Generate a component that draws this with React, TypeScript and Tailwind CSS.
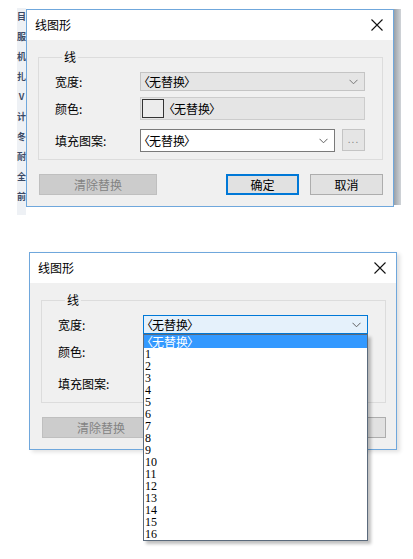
import React from "react";

const FONT = { fontFamily: '"Noto Sans CJK SC", "Noto Sans", sans-serif' };

const Chevron: React.FC<{ color?: string }> = ({ color = "#606060" }) => (
  <svg width="9" height="6" viewBox="0 0 9 6" className="flex-none">
    <path d="M0.5 0.8 L4.5 4.8 L8.5 0.8" fill="none" stroke={color} strokeWidth="1" />
  </svg>
);

const CloseX: React.FC = () => (
  <svg width="12" height="12" viewBox="0 0 12 12">
    <path d="M0.5 0.5 L11.5 11.5 M11.5 0.5 L0.5 11.5" stroke="#111" strokeWidth="1.1" />
  </svg>
);

// "〈无替换〉" with the brackets pulled in, as the narrow ones of the original
const NoReplace: React.FC = () => (
  <span className="whitespace-nowrap">
    <span className="-ml-[5px]">〈</span>
    <span className="-ml-[1px]">无替换</span>
    <span className="-ml-[1px] -mr-[5px]">〉</span>
  </span>
);

const WIDTHS = Array.from({ length: 16 }, (_, i) => String(i + 1));

const WidthList: React.FC = () => (
  <div className="absolute left-0 top-full w-[225px] z-10 border border-[#5a6a7c] bg-white shadow-[3px_3px_3px_rgba(0,0,0,0.25)]">
    <div className="h-[13px] bg-[#3399ff] text-white text-[12px] leading-[13px] pl-[2px]">
      <NoReplace />
    </div>
    {WIDTHS.map((w) => (
      <div
        key={w}
        className="h-[12px] text-[12px] leading-[12px] text-black pl-[1px]"
        style={{ fontFamily: '"Liberation Serif", serif' }}
      >
        {w}
      </div>
    ))}
  </div>
);

const LineDialog: React.FC<{ open?: boolean }> = ({ open = false }) => {
  // controls hidden under the open width list
  const covered = open ? "invisible" : "";
  return (
    <div
      className="w-[368px] h-[198px] border border-[#6fa7dc] bg-[#f0f0f0] flex flex-col text-black text-[12px]"
      style={FONT}
    >
      <div className="h-[30px] flex-none bg-white flex items-center justify-between pl-[8px] pr-[10px]">
        <span className="leading-none">线图形</span>
        <CloseX />
      </div>
      <div className="flex-1 flex flex-col pr-[10px] pl-[11px]">
        <fieldset className="mt-[9px] border border-[#dcdcdc] pl-[16px] pr-[17px] pt-[7px] pb-[7px]">
          <legend className="ml-[7px] px-[2px] leading-[16px]">线</legend>
          <div className="grid grid-cols-[85px_225px] items-center">
            <span>宽度:</span>
            <div className="relative">
              {open ? (
                <div className="h-[19px] border border-[#0078d7] bg-[#e5f1fb] flex items-center justify-between pl-[2px] pr-[6px]">
                  <NoReplace />
                  <Chevron />
                </div>
              ) : (
                <div className="h-[19px] border border-[#c4c4c4] bg-[#e5e5e5] flex items-center justify-between pl-[2px] pr-[6px]">
                  <NoReplace />
                  <Chevron color="#777" />
                </div>
              )}
              {open && <WidthList />}
            </div>

            <span className="mt-[6px]">颜色:</span>
            <div
              className={`mt-[6px] h-[23px] border border-[#cccccc] bg-[#e5e5e5] flex items-center pl-[1px] gap-[4px] ${covered}`}
            >
              <div className="w-[22px] h-[19px] border border-[#333] bg-[#ececec]" />
              <NoReplace />
            </div>

            <span className="mt-[9px]">填充图案:</span>
            <div className={`mt-[9px] flex gap-[7px] ${covered}`}>
              <div className="w-[195px] h-[23px] border border-[#7a7a7a] bg-white flex items-center justify-between pl-[2px] pr-[6px]">
                <NoReplace />
                <Chevron />
              </div>
              <div className="w-[23px] h-[22px] border border-[#c4c4c4] bg-[#e5e5e5] flex items-end justify-center pb-[6px] text-[#888] text-[10px] leading-none tracking-[1px]">
                ...
              </div>
            </div>
          </div>
        </fieldset>
        <div className="mt-[14px] flex items-center">
          <div className="w-[118px] h-[21px] ml-[1px] border border-[#bfbfbf] bg-[#cccccc] text-[#838383] flex items-center justify-center">
            清除替换
          </div>
          <div
            className={`ml-auto w-[73px] h-[21px] border-2 border-[#0078d7] bg-[#e1e1e1] flex items-center justify-center ${covered}`}
          >
            确定
          </div>
          <div className="ml-[11px] w-[73px] h-[21px] border border-[#adadad] bg-[#e1e1e1] flex items-center justify-center">
            {open ? "" : "取消"}
          </div>
        </div>
      </div>
    </div>
  );
};

const BehindStrip: React.FC = () => (
  <div
    className="w-[9px] h-[207px] bg-[#eef1f5] flex flex-col items-center pt-[4px] gap-[11px] text-[#3a4a66] text-[9px] leading-[9px] font-bold"
    style={FONT}
  >
    {["目", "服", "机", "扎", "V", "计", "冬", "耐", "全", "前"].map((c, i) => (
      <span key={i}>{c}</span>
    ))}
  </div>
);

export default function App() {
  return (
    <div className="w-[413px] h-[559px] bg-white overflow-hidden">
      <div className="h-[215px] pt-[8px] pl-[17px] flex items-start">
        <BehindStrip />
        <div className="mt-[1px]">
          <LineDialog />
        </div>
        <div className="mt-[1px] w-[7px] h-[196px] bg-gradient-to-r from-[#9aa1a9] to-[#d0d4d8]" />
      </div>
      <div className="mt-[37px] pl-[29px]">
        <div className="w-fit shadow-[3px_2px_4px_rgba(0,0,0,0.12)]">
          <LineDialog open />
        </div>
      </div>
    </div>
  );
}
